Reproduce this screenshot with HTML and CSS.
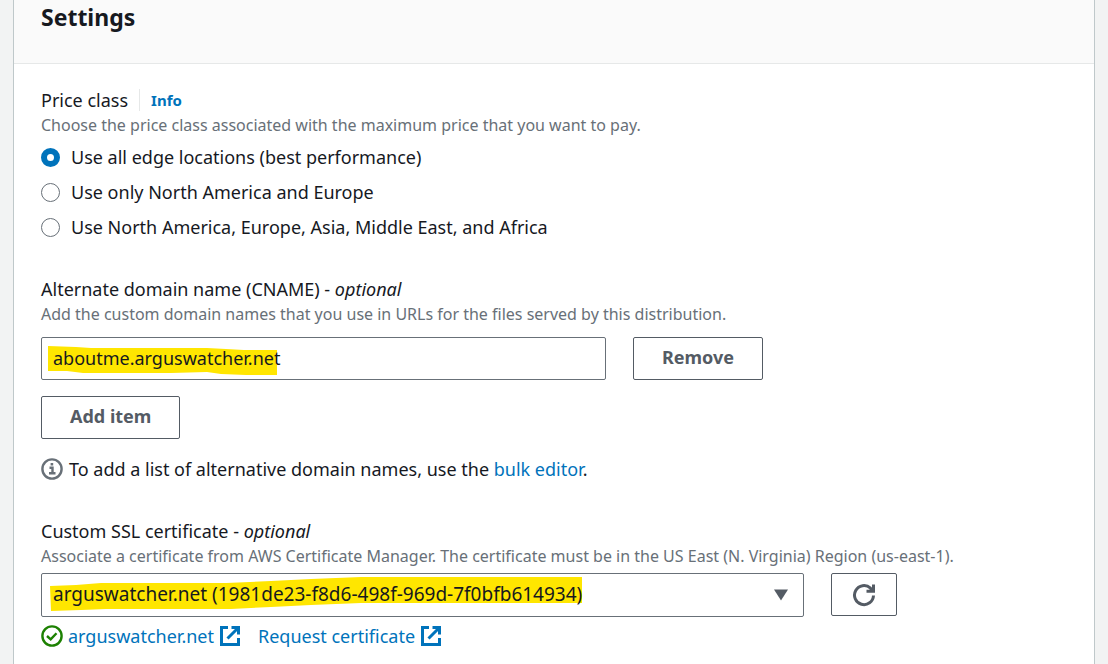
FILE: index.html
```
<!DOCTYPE html>
<html lang="en">
<head>
<meta charset="utf-8">
<meta name="viewport" content="width=device-width, initial-scale=1">
<title>Settings</title>
<link rel="stylesheet" href="styles.css">
</head>
<body>
<main class="panel">
  <header class="panel-header"><h2>Settings</h2></header>
  <form class="panel-body">
    <fieldset class="field" aria-labelledby="price-label">
      <div class="label-row">
        <span class="label" id="price-label">Price class</span>
        <a class="info-link" href="#info">Info</a>
      </div>
      <p class="hint">Choose the price class associated with the maximum price that you want to pay.</p>
      <div class="radios">
        <label class="radio"><input type="radio" name="price" checked><span>Use all edge locations (best performance)</span></label>
        <label class="radio"><input type="radio" name="price"><span>Use only North America and Europe</span></label>
        <label class="radio"><input type="radio" name="price"><span>Use North America, Europe, Asia, Middle East, and Africa</span></label>
      </div>
    </fieldset>

    <section class="field">
      <label class="label" for="cname">Alternate domain name (CNAME) - <em>optional</em></label>
      <p class="hint">Add the custom domain names that you use in URLs for the files served by this distribution.</p>
      <div class="control-row cname-row">
        <div class="control cname-control">
          <svg class="marker" width="240" height="43" viewBox="0 0 240 43" aria-hidden="true"><path d="M7 9 35 10 50 11H166L185 12 203 13H236V38H205L180 37 166 35 130 36H42L26 34H7Z"/></svg>
          <input class="box" id="cname" type="text" value="aboutme.arguswatcher.net">
        </div>
        <button class="button" type="button">Remove</button>
      </div>
      <button class="button add-button" type="button">Add item</button>
      <p class="note">
        <svg class="status-icon gray" viewBox="0 0 22 22" aria-hidden="true"><circle cx="11" cy="11" r="9.6"/><path d="M8.5 9.7H11.5V15M8 15.2H14.5M9.6 6.2H12.2" /></svg>
        <span>To add a list of alternative domain names, use the <a href="#bulk">bulk editor</a>.</span>
      </p>
    </section>

    <section class="field cert-field">
      <label class="label" for="cert">Custom SSL certificate - <em>optional</em></label>
      <p class="hint">Associate a certificate from AWS Certificate Manager. The certificate must be in the US East (N. Virginia) Region (us-east-1).</p>
      <div class="control-row cert-row">
        <div class="control cert-control">
          <svg class="marker" width="550" height="44" viewBox="0 0 550 44" aria-hidden="true"><path d="M9 13 35 12 60 10H185L230 8 270 6 320 4H541V30H320L270 32 230 34 190 36H65L40 37 10 38Z"/></svg>
          <select class="box" id="cert"><option>arguswatcher.net (1981de23-f8d6-498f-969d-7f0bfb614934)</option></select>
          <svg class="caret" width="14" height="12" viewBox="0 0 14 12" aria-hidden="true"><path d="M0 .5H14L7 11.5Z"/></svg>
        </div>
        <button class="button refresh-button" type="button" aria-label="Refresh">
          <svg width="24" height="24" viewBox="0 0 24 24" aria-hidden="true"><path d="M21.5 12.5A9.5 9.5 0 1 1 18.5 5.2L21 8M21.5 1.5V8.3H14.5"/></svg>
        </button>
      </div>
      <div class="links">
        <svg class="status-icon green" viewBox="0 0 22 22" aria-hidden="true"><circle cx="11" cy="11" r="9.6"/><path d="M6 11 9.7 14.4 15.5 8.2"/></svg>
        <a class="external" href="#certificate">arguswatcher.net
          <svg width="20" height="20" viewBox="0 0 20 20" aria-hidden="true"><path d="M8 1.5H1.5V18.5H18.5V12M11.5 1.5H18.5V8.5M18 2 7.5 12.5"/></svg></a>
        <a class="external request" href="#request">Request certificate
          <svg width="20" height="20" viewBox="0 0 20 20" aria-hidden="true"><path d="M8 1.5H1.5V18.5H18.5V12M11.5 1.5H18.5V8.5M18 2 7.5 12.5"/></svg></a>
      </div>
    </section>
  </form>
</main>
</body>
</html>
```
FILE: styles.css
```
* { box-sizing: border-box; }
body {
  margin: 0;
  padding: 0 13px;
  min-height: 100vh;
  display: flex;
  background: #f2f3f3;
  color: #16191f;
  font: 18px/26px "Noto Sans", "Open Sans", sans-serif;
}
.panel {
  flex: 1;
  min-width: 0;
  background: #fff;
  border: solid #bfc8ca;
  border-width: 0 1px;
}
.panel-header {
  padding: 2px 27px 31px;
  background: #fafafa;
  border-bottom: 1px solid #e6e8e8;
}
h2 { margin: 0; font-size: 23px; line-height: 30px; font-weight: 700; }
.panel-body { padding: 23px 27px 14px; }
.field { margin: 0 0 33px; padding: 0; border: 0; min-width: 0; }
.cert-field { margin: 35px 0 0; }
.label { display: block; }
.label-row { display: flex; align-items: center; }
.info-link {
  margin-left: 11px;
  padding-left: 11px;
  border-left: 1px solid #e6e8e8;
  font-size: 15px;
  line-height: 22px;
  font-weight: 700;
}
a { color: #0073bb; text-decoration: none; }
.hint { margin: 0; color: #687078; font-size: 16px; line-height: 24px; }
.radios { display: grid; gap: 3px; margin-top: 4px; }
.radio { display: flex; align-items: center; gap: 11px; line-height: 32px; }
.radio input {
  appearance: none;
  width: 19px;
  height: 19px;
  margin: 0;
  border: 1px solid #687078;
  border-radius: 50%;
  background: #fff;
}
.radio input:checked { border: 6px solid #0073bb; }
.control-row { display: flex; align-items: flex-start; gap: 27px; margin-top: 11px; }
.cert-row { margin-top: 5px; }
.control { position: relative; flex: 1; }
.cname-control { max-width: 565px; }
.cert-control { max-width: 763px; }
.marker { position: absolute; left: 0; top: 0; fill: #ffe600; }
.box {
  position: relative;
  display: block;
  width: 100%;
  height: 43px;
  padding: 0 11px 2px;
  border: 1px solid #687078;
  border-radius: 2px;
  appearance: none;
  background: transparent;
  color: inherit;
  font: inherit;
}
select.box { height: 44px; padding-right: 40px; font-size: 19px; }
.caret { position: absolute; right: 16px; top: 16px; fill: #545b64; pointer-events: none; }
.button {
  height: 43px;
  padding: 0 28px 4px;
  border: 1px solid #545b64;
  border-radius: 2px;
  background: #fff;
  color: #545b64;
  font: inherit;
  font-weight: 700;
}
.add-button { display: block; margin-top: 16px; }
.refresh-button { width: 66px; padding: 0; display: grid; place-items: center; }
.refresh-button svg { fill: none; stroke: #545b64; stroke-width: 3; }
.note { display: flex; align-items: center; gap: 6px; margin: 16px 0 0; line-height: 28px; }
.status-icon { flex: none; width: 22px; height: 22px; fill: none; stroke-width: 2.4; }
.gray { stroke: #687078; }
.green { stroke: #1d8102; }
.links { display: flex; align-items: center; margin-top: 5px; line-height: 28px; }
.external { display: flex; align-items: center; gap: 6px; margin-left: 5px; }
.request { margin-left: 18px; }
.external svg { fill: none; stroke: #0073bb; stroke-width: 3; }
```
